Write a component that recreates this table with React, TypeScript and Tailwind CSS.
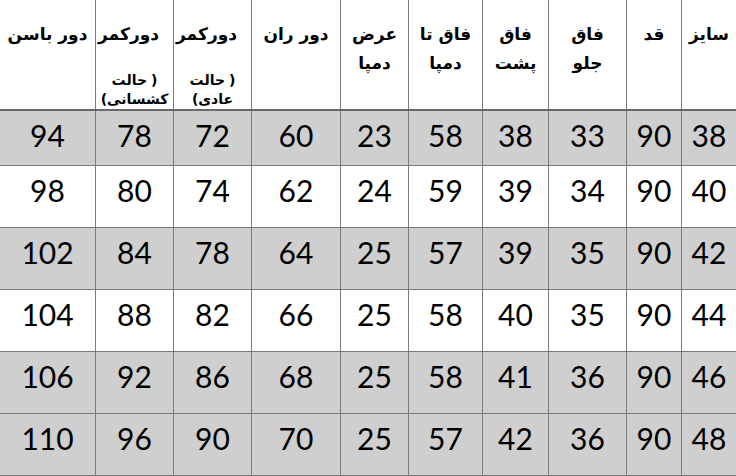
import React from "react";

const cols = ["w-[96px]", "w-[78px]", "w-[78px]", "w-[89px]", "w-[68px]", "w-[74px]", "w-[66px]", "w-[78px]", "w-[55px]", "w-[54px]"];

type Head = { title: string[]; sub?: string; shift?: boolean };

const heads: Head[] = [
  { title: ["دور باسن"] },
  { title: ["دورکمر"], sub: "کشسانی", shift: true },
  { title: ["دورکمر"], sub: "عادی", shift: true },
  { title: ["دور ران"] },
  { title: ["عرض", "دمپا"] },
  { title: ["فاق تا", "دمپا"] },
  { title: ["فاق", "پشت"] },
  { title: ["فاق", "جلو"] },
  { title: ["قد"] },
  { title: ["سایز"] },
];

const rows: { v: number[]; gray: boolean; h: string }[] = [
  { v: [94, 78, 72, 60, 23, 58, 38, 33, 90, 38], gray: true, h: "h-[55px]" },
  { v: [98, 80, 74, 62, 24, 59, 39, 34, 90, 40], gray: false, h: "h-[62px]" },
  { v: [102, 84, 78, 64, 25, 57, 39, 35, 90, 42], gray: true, h: "h-[62px]" },
  { v: [104, 88, 82, 66, 25, 58, 40, 35, 90, 44], gray: false, h: "h-[62px]" },
  { v: [106, 92, 86, 68, 25, 58, 41, 36, 90, 46], gray: true, h: "h-[62px]" },
  { v: [110, 96, 90, 70, 25, 57, 42, 36, 90, 48], gray: true, h: "h-[62px]" },
];

export default function App() {
  return (
    <div className="w-[736px] h-[476px] bg-white overflow-hidden text-black">
      <div className="flex h-[111px] border-b-2 border-[#6a6a6a]">
        {heads.map((hd, i) => (
          <div
            key={i}
            className={`${cols[i]} shrink-0 ${i < 9 ? "border-r border-[#7a7a7a]" : ""} flex flex-col items-center pt-[20px] text-center font-bold`}
            style={{ fontFamily: '"DejaVu Sans", "Liberation Sans", sans-serif' }}
          >
            <div dir="rtl" className={`text-[17px] leading-[29px] whitespace-nowrap ${hd.shift ? "pr-[12px]" : ""}`}>
              {hd.title.map((t, j) => (
                <div key={j}>{t}</div>
              ))}
            </div>
            {hd.sub && (
              <div className="mt-[22px] text-[14px] leading-[19px] whitespace-nowrap flex flex-col items-center">
                <div dir="ltr" className="flex flex-row gap-[4px]">
                  <span dir="rtl">حالت</span>
                  <span>)</span>
                </div>
                <div dir="ltr" className="flex flex-row">
                  <span>(</span>
                  <span dir="rtl">{hd.sub}</span>
                </div>
              </div>
            )}
          </div>
        ))}
      </div>
      {rows.map((r, ri) => (
        <div key={ri} className={`flex ${r.h} border-b border-[#7a7a7a] ${r.gray ? "bg-[#cfcfcf]" : "bg-white"}`}>
          {r.v.map((n, ci) => (
            <div
              key={ci}
              className={`${cols[ci]} shrink-0 ${ci < 9 ? "border-r border-[#7a7a7a]" : ""} flex justify-center pt-[9px] text-[30px] leading-none`}
              style={{ fontFamily: 'Lato, "Open Sans", sans-serif' }}
            >
              {n}
            </div>
          ))}
        </div>
      ))}
    </div>
  );
}
